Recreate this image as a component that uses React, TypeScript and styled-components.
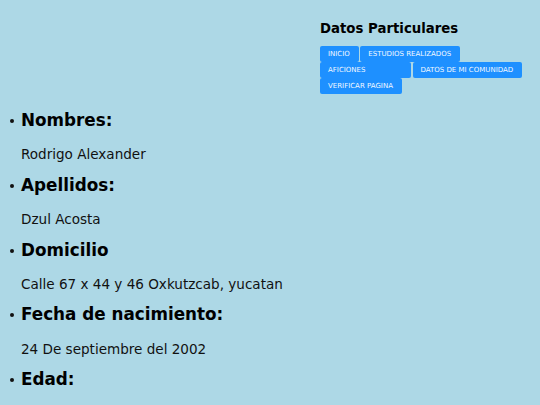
import React from 'react';
import styled, { createGlobalStyle } from 'styled-components';

const GlobalStyle = createGlobalStyle`
  html, body {
    margin: 0;
    padding: 0;
    background-color: #add8e6;
  }
  body {
    font-family: "DejaVu Sans", Verdana, sans-serif;
    color: #111;
  }
`;

const Page = styled.div`
  min-height: 405px;
  background-color: #add8e6;
`;

const Header = styled.header`
  display: flex;
  justify-content: flex-end;
  padding: 21px 8px 0 0;
`;

const Panel = styled.div`
  width: 212px;
`;

const Title = styled.h1`
  font-size: 13.3px;
  font-weight: bold;
  margin: 0 0 10px 0;
  color: #000;
`;

const Nav = styled.nav`
  display: flex;
  flex-wrap: wrap;
  column-gap: 1.5px;
  row-gap: 0;
`;

const NavButton = styled.a<{ $minWidth?: number }>`
  display: block;
  box-sizing: border-box;
  min-width: ${props => (props.$minWidth ? `${props.$minWidth}px` : 'auto')};
  padding: 4px 9px 4px 8px;
  font-size: 7px;
  line-height: 8px;
  text-transform: uppercase;
  color: #f2f8ff;
  background-color: #1e90ff;
  border-radius: 2px;
  text-decoration: none;
  white-space: nowrap;
  cursor: pointer;
`;

const List = styled.ul`
  margin: 16px 0 0 0;
  padding: 0 0 0 21px;
  list-style: none;
`;

const Item = styled.li`
  margin: 0;
`;

const Label = styled.h2`
  display: flex;
  align-items: center;
  font-size: 16.8px;
  font-weight: bold;
  margin: 0 0 16.3px 0;
  color: #000;

  &::before {
    content: '';
    flex: none;
    width: 4px;
    height: 4px;
    margin: 2px 7px 0 -11px;
    border-radius: 50%;
    background-color: #111;
  }
`;

const Value = styled.p`
  font-size: 13.55px;
  margin: 0 0 12.5px 0;
`;

const links = [
  { text: 'Inicio' },
  { text: 'Estudios realizados' },
  { text: 'Aficiones', minWidth: 91 },
  { text: 'Datos de mi comunidad' },
  { text: 'Verificar pagina' },
];

const datos = [
  { label: 'Nombres:', value: 'Rodrigo Alexander' },
  { label: 'Apellidos:', value: 'Dzul Acosta' },
  { label: 'Domicilio', value: 'Calle 67 x 44 y 46 Oxkutzcab, yucatan' },
  { label: 'Fecha de nacimiento:', value: '24 De septiembre del 2002' },
  { label: 'Edad:', value: '' },
];

export default function App() {
  return (
    <Page>
      <GlobalStyle />
      <Header>
        <Panel>
          <Title>Datos Particulares</Title>
          <Nav>
            {links.map(link => (
              <NavButton key={link.text} $minWidth={link.minWidth}>
                {link.text}
              </NavButton>
            ))}
          </Nav>
        </Panel>
      </Header>
      <List>
        {datos.map(d => (
          <Item key={d.label}>
            <Label>{d.label}</Label>
            {d.value && <Value>{d.value}</Value>}
          </Item>
        ))}
      </List>
    </Page>
  );
}
